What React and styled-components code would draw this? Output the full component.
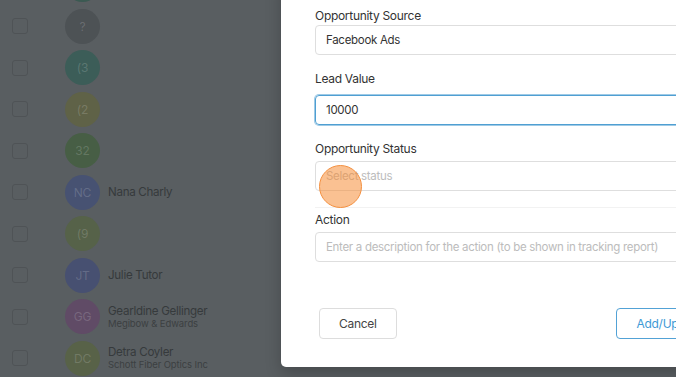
import React from 'react';
import styled, { createGlobalStyle } from 'styled-components';

const GlobalStyle = createGlobalStyle`
  html, body {
    margin: 0;
    padding: 0;
    background: #595e61;
  }
  body {
    font-family: Inter, "Noto Sans", sans-serif;
  }
`;

const Screen = styled.div`
  position: relative;
  width: 676px;
  height: 377px;
  overflow: hidden;
  background: #595e61;
`;

// contact list behind the dimmed overlay
const ContactList = styled.div`
  display: flex;
  flex-direction: column;
  margin-top: -36.25px;
`;

const Row = styled.div`
  display: flex;
  align-items: center;
  height: 41.5px;
  padding-left: 12px;
`;

const Checkbox = styled.span`
  flex: none;
  width: 14px;
  height: 14px;
  border: 1px solid #4f5356;
  border-radius: 3px;
  margin-right: 37px;
`;

const Avatar = styled.div`
  flex: none;
  width: 35px;
  height: 35px;
  border-radius: 50%;
  background: ${(p) => p.color};
  color: rgba(255, 255, 255, 0.17);
  font-size: 12px;
  letter-spacing: -0.2px;
  display: flex;
  align-items: center;
  justify-content: center;
  margin-right: 8px;
`;

const Who = styled.div`
  display: flex;
  flex-direction: column;
`;

const Name = styled.span`
  font-size: 11.6px;
  line-height: 14px;
  letter-spacing: -0.3px;
  color: #363a3c;
`;

const Company = styled.span`
  font-size: 9.5px;
  line-height: 12px;
  letter-spacing: -0.1px;
  color: #3c4042;
`;

// the modal panel
const Modal = styled.div`
  position: absolute;
  left: 281px;
  top: -20px;
  width: 480px;
  box-sizing: border-box;
  padding: 28px 34px 28px 34px;
  background: #ffffff;
  border-radius: 5px;
  box-shadow: 0 6px 16px rgba(0, 0, 0, 0.22);
  letter-spacing: -0.3px;
`;

const Field = styled.div`
  display: flex;
  flex-direction: column;
  margin-top: ${(p) => p.top || 0}px;
`;

const Label = styled.label`
  font-size: 12px;
  line-height: 16px;
  color: #333333;
  margin-bottom: ${(p) => p.gap}px;
`;

const Input = styled.div`
  box-sizing: border-box;
  height: 30px;
  display: flex;
  align-items: center;
  padding-left: 10px;
  border: 1px solid ${(p) => (p.focused ? '#4f9fd2' : '#dedede')};
  box-shadow: ${(p) => (p.focused ? '0 0 0 1px rgba(79, 159, 210, 0.55)' : 'none')};
  border-radius: 4px;
  font-size: 11.5px;
  color: ${(p) => (p.placeholder ? '#bcbcbc' : '#333333')};
  white-space: nowrap;
`;

const Divider = styled.div`
  height: 1px;
  background: #f2f2f2;
  margin: 16px 0 4px;
`;

const Footer = styled.div`
  display: flex;
  justify-content: space-between;
  margin-top: 46px;
  padding: 0 4px;
`;

const Button = styled.button`
  box-sizing: border-box;
  height: 31px;
  padding: 0 ${(p) => (p.primary ? 20 : 19)}px;
  background: #ffffff;
  border: 1px solid ${(p) => (p.primary ? '#52a2d6' : '#dddddd')};
  border-radius: 4px;
  font-family: Inter, "Noto Sans", sans-serif;
  font-size: 12px;
  letter-spacing: -0.3px;
  color: ${(p) => (p.primary ? '#3e9ad6' : '#454545')};
`;

// orange click marker from the screen recording
const ClickMarker = styled.div`
  position: absolute;
  left: 319px;
  top: 165px;
  width: 43px;
  height: 43px;
  box-sizing: border-box;
  border-radius: 50%;
  background: rgba(246, 142, 56, 0.55);
  border: 1.5px solid #f49040;
`;

const contacts = [
  { initials: '', color: '#3b5a52' },
  { initials: '?', color: '#4d5255' },
  { initials: '(3', color: '#3c5d58' },
  { initials: '(2', color: '#5f6247' },
  { initials: '32', color: '#475e45' },
  { initials: 'NC', color: '#475272', name: 'Nana Charly' },
  { initials: '(9', color: '#566249' },
  { initials: 'JT', color: '#475071', name: 'Julie Tutor' },
  { initials: 'GG', color: '#604b66', name: 'Gearldine Gellinger', company: 'Megibow & Edwards' },
  { initials: 'DC', color: '#586248', name: 'Detra Coyler', company: 'Schott Fiber Optics Inc' },
];

const App = () => (
  <Screen>
    <GlobalStyle />
    <ContactList>
      {contacts.map((c, i) => (
        <Row key={i}>
          <Checkbox />
          <Avatar color={c.color}>{c.initials}</Avatar>
          {c.name && (
            <Who>
              <Name>{c.name}</Name>
              {c.company && <Company>{c.company}</Company>}
            </Who>
          )}
        </Row>
      ))}
    </ContactList>

    <Modal>
      <Field>
        <Label gap={1}>Opportunity Source</Label>
        <Input>Facebook Ads</Input>
      </Field>
      <Field top={16}>
        <Label gap={8}>Lead Value</Label>
        <Input focused>10000</Input>
      </Field>
      <Field top={16}>
        <Label gap={4}>Opportunity Status</Label>
        <Input placeholder="true">Select status</Input>
      </Field>
      <Divider />
      <Field>
        <Label gap={4}>Action</Label>
        <Input placeholder="true">Enter a description for the action (to be shown in tracking report)</Input>
      </Field>
      <Footer>
        <Button>Cancel</Button>
        <Button primary>Add/Update</Button>
      </Footer>
    </Modal>

    <ClickMarker />
  </Screen>
);

export default App;
